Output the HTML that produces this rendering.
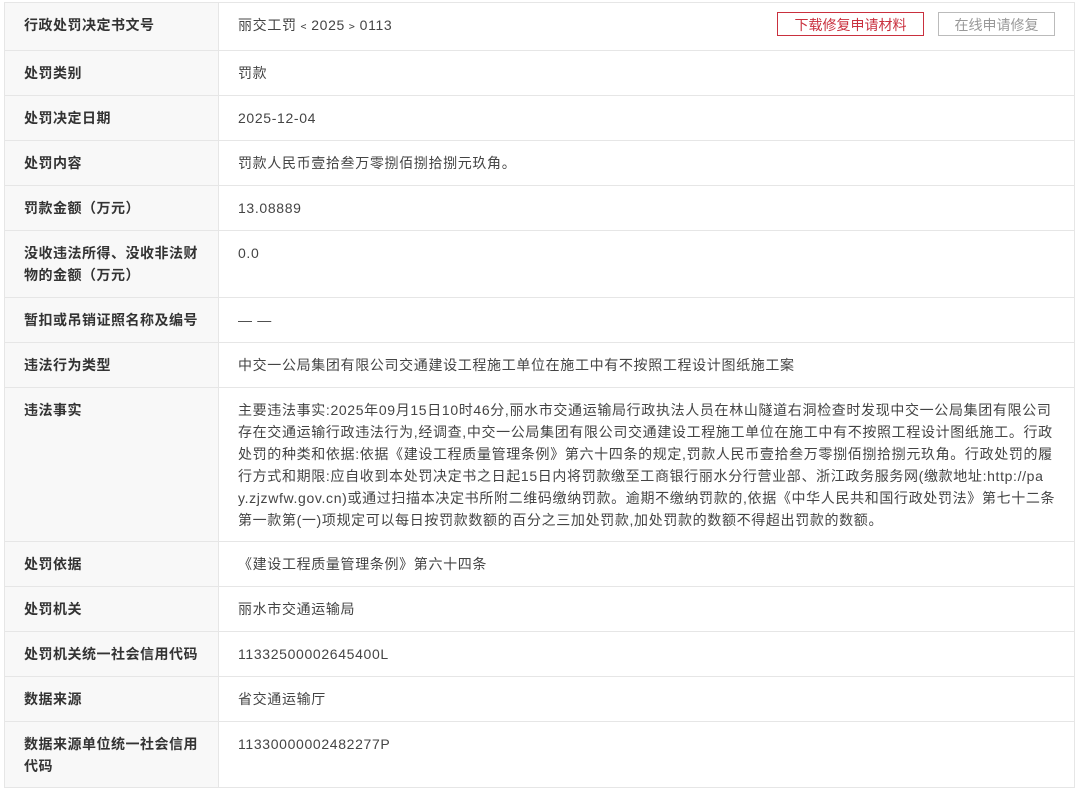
<!DOCTYPE html>
<html><head><meta charset="utf-8"><style>
html,body{margin:0;padding:0;background:#fff;}
body{width:1080px;height:794px;overflow:hidden;font-family:"Liberation Sans","Noto Sans CJK SC",sans-serif;font-size:14px;color:#333;}
table{position:absolute;left:4px;top:2px;width:1071px;border-collapse:collapse;table-layout:fixed;}
td{border:1px solid #e6e6e6;vertical-align:middle;line-height:22px;padding:0;}
td.l{width:194px;padding-left:19px;font-weight:bold;background:#f8f8f8;color:#333;letter-spacing:0.5px;}
td.v{padding-left:19px;padding-right:4px;color:#444;letter-spacing:0.65px;}
td.top{vertical-align:top;padding-top:11px;}
.btn{position:absolute;top:12px;height:24px;line-height:24px;font-size:14px;text-align:center;box-sizing:border-box;}
</style></head><body>
<table>
<tr style="height:48px"><td class="l" style="padding-bottom:4px">行政处罚决定书文号</td><td class="v" style="padding-bottom:4px">丽交工罚﹤2025﹥0113</td></tr>
<tr style="height:45px"><td class="l">处罚类别</td><td class="v">罚款</td></tr>
<tr style="height:45px"><td class="l">处罚决定日期</td><td class="v">2025-12-04</td></tr>
<tr style="height:45px"><td class="l">处罚内容</td><td class="v">罚款人民币壹拾叁万零捌佰捌拾捌元玖角。</td></tr>
<tr style="height:45px"><td class="l">罚款金额（万元）</td><td class="v">13.08889</td></tr>
<tr style="height:67px"><td class="l">没收违法所得、没收非法财<br>物的金额（万元）</td><td class="v top">0.0</td></tr>
<tr style="height:45px"><td class="l">暂扣或吊销证照名称及编号</td><td class="v">— —</td></tr>
<tr style="height:45px"><td class="l">违法行为类型</td><td class="v">中交一公局集团有限公司交通建设工程施工单位在施工中有不按照工程设计图纸施工案</td></tr>
<tr style="height:154px"><td class="l top">违法事实</td><td class="v" style="white-space:nowrap">主要违法事实:2025年09月15日10时46分,丽水市交通运输局行政执法人员在林山隧道右洞检查时发现中交一公局集团有限公司<br>存在交通运输行政违法行为,经调查,中交一公局集团有限公司交通建设工程施工单位在施工中有不按照工程设计图纸施工。行政<br>处罚的种类和依据:依据《建设工程质量管理条例》第六十四条的规定,罚款人民币壹拾叁万零捌佰捌拾捌元玖角。行政处罚的履<br>行方式和期限:应自收到本处罚决定书之日起15日内将罚款缴至工商银行丽水分行营业部、浙江政务服务网(缴款地址:http://pa<br>y.zjzwfw.gov.cn)或通过扫描本决定书所附二维码缴纳罚款。逾期不缴纳罚款的,依据《中华人民共和国行政处罚法》第七十二条<br>第一款第(一)项规定可以每日按罚款数额的百分之三加处罚款,加处罚款的数额不得超出罚款的数额。</td></tr>
<tr style="height:45px"><td class="l">处罚依据</td><td class="v">《建设工程质量管理条例》第六十四条</td></tr>
<tr style="height:45px"><td class="l">处罚机关</td><td class="v">丽水市交通运输局</td></tr>
<tr style="height:45px"><td class="l">处罚机关统一社会信用代码</td><td class="v">11332500002645400L</td></tr>
<tr style="height:45px"><td class="l">数据来源</td><td class="v">省交通运输厅</td></tr>
<tr style="height:66px"><td class="l">数据来源单位统一社会信用<br>代码</td><td class="v top">11330000002482277P</td></tr>
</table>
<div class="btn" style="left:777px;width:147px;border:1px solid #c9303e;color:#c9303e;background:#fff;">下载修复申请材料</div>
<div class="btn" style="left:938px;width:117px;border:1px solid #bbb;color:#999;background:#fff;">在线申请修复</div>
</body></html>
